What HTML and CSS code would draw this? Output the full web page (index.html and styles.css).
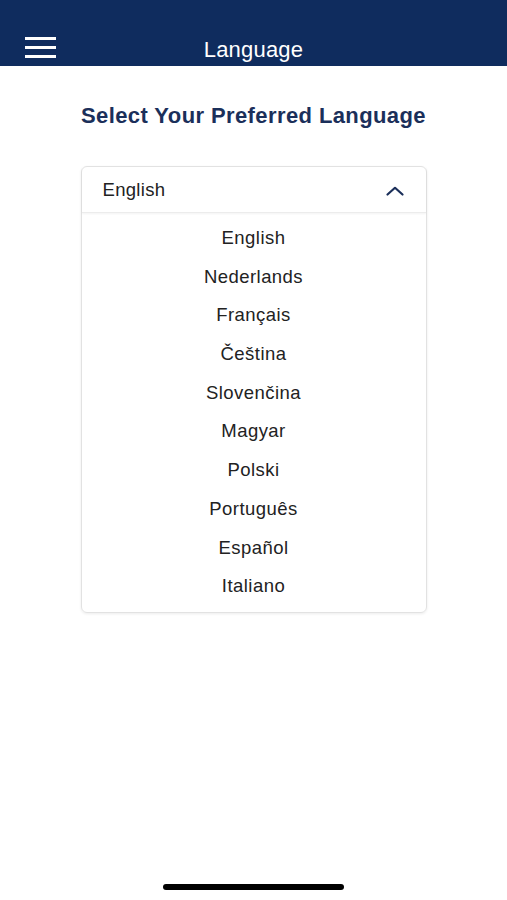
FILE: index.html
```html
<!DOCTYPE html>
<html lang="en">
<head>
    <meta charset="UTF-8">
    <meta name="viewport" content="width=device-width, initial-scale=1.0">
    <title>Language</title>
    <link rel="stylesheet" href="styles.css">
</head>
<body>
    <div class="app">
        <div class="topbar">
            <button class="menu-button" aria-label="Menu">
                <span></span><span></span><span></span>
            </button>
            <div class="topbar-title">Language</div>
        </div>

        <h1 class="page-title">Select Your Preferred Language</h1>

        <div class="dropdown">
            <div class="dropdown-head">
                <span class="selected">English</span>
                <svg class="chevron" width="18" height="10" viewBox="0 0 18 10">
                    <path d="M1.5 8.5 L9 1.8 L16.5 8.5" fill="none" stroke="#1b2f5a" stroke-width="2.2" stroke-linecap="round" stroke-linejoin="round"/>
                </svg>
            </div>
            <ul class="options">
                <li>English</li>
                <li>Nederlands</li>
                <li>Français</li>
                <li>Čeština</li>
                <li>Slovenčina</li>
                <li>Magyar</li>
                <li>Polski</li>
                <li>Português</li>
                <li>Español</li>
                <li>Italiano</li>
            </ul>
        </div>

        <div class="home-indicator"></div>
    </div>
</body>
</html>
```

FILE: styles.css
```css
body {
    margin: 0;
    padding: 0;
    font-family: "Liberation Sans", Arial, sans-serif;
    background-color: #fff;
}

.app {
    width: 507px;
    height: 900px;
    display: flex;
    flex-direction: column;
    align-items: center;
}

.topbar {
    align-self: stretch;
    height: 66px;
    background-color: #0f2c5e;
    display: flex;
    align-items: flex-end;
    padding: 0 0 8px 25px;
    box-sizing: border-box;
    position: relative;
}

.menu-button {
    width: 31px;
    height: 21px;
    padding: 0;
    border: none;
    background: none;
    display: flex;
    flex-direction: column;
    justify-content: space-between;
}

.menu-button span {
    display: block;
    height: 3px;
    background-color: #fff;
}

.topbar-title {
    position: absolute;
    left: 0;
    right: 0;
    bottom: 3px;
    text-align: center;
    color: #fff;
    font-size: 22px;
    letter-spacing: 0.2px;
}

.page-title {
    margin: 37px 0 0;
    font-size: 22px;
    font-weight: bold;
    letter-spacing: 0.4px;
    color: #1b2f5a;
}

.dropdown {
    width: 344px;
    margin-top: 37px;
    border: 1px solid #e2e2e2;
    border-radius: 6px;
    box-shadow: 0 1px 3px rgba(0, 0, 0, 0.08);
}

.dropdown-head {
    height: 45px;
    display: flex;
    align-items: center;
    justify-content: space-between;
    padding: 0 22px 0 21px;
    border-bottom: 1px solid #ececec;
    box-shadow: 0 1px 2px rgba(0, 0, 0, 0.05);
    font-size: 18.5px;
    letter-spacing: 0.3px;
    color: #222;
}

.chevron {
    margin-top: 2px;
}

.options {
    list-style: none;
    margin: 0;
    padding: 6px 0 6px;
}

.options li {
    height: 38.7px;
    line-height: 38.7px;
    text-align: center;
    font-size: 18.5px;
    letter-spacing: 0.45px;
    color: #222;
}

.home-indicator {
    margin-top: auto;
    margin-bottom: 10px;
    width: 181px;
    height: 6px;
    border-radius: 3px;
    background-color: #000;
}
```
